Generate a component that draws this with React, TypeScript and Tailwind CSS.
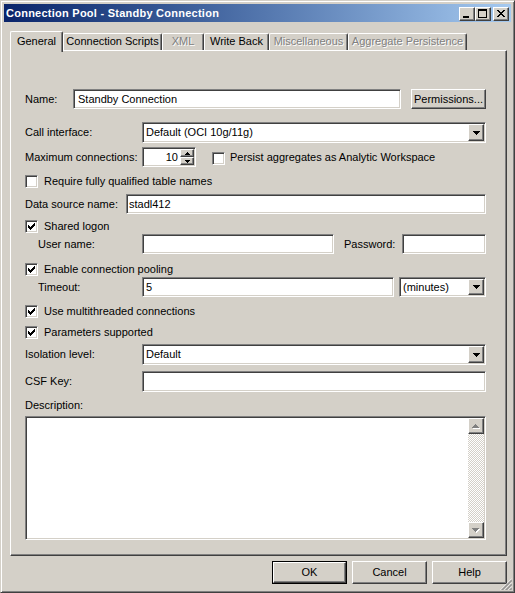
import type { ReactNode } from 'react'

// Win2000 classic chrome: face #d4d0c8, 3D edges white / #808080 / #404040.
const raised =
  'border border-t-white border-l-white border-r-[#404040] border-b-[#404040] shadow-[inset_-1px_-1px_0_#808080]'
const sunken =
  'border border-t-[#808080] border-l-[#808080] border-r-white border-b-white shadow-[inset_1px_1px_0_#404040,inset_-1px_-1px_0_#d4d0c8]'
const disabledText = 'text-[#808080] [text-shadow:1px_1px_0_#fff]'

function DownArrow({ color = '#000' }: { color?: string }) {
  return (
    <svg width="7" height="4" shapeRendering="crispEdges" className="block">
      <rect x="0" y="0" width="7" height="1" fill={color} />
      <rect x="1" y="1" width="5" height="1" fill={color} />
      <rect x="2" y="2" width="3" height="1" fill={color} />
      <rect x="3" y="3" width="1" height="1" fill={color} />
    </svg>
  )
}

function UpArrow({ color = '#000', size = 7 }: { color?: string; size?: number }) {
  const rows = size === 7 ? 4 : 3
  return (
    <svg width={size} height={rows} shapeRendering="crispEdges" className="block">
      {Array.from({ length: rows }).map((_, i) => (
        <rect key={i} x={rows - 1 - i} y={i} width={size - 2 * (rows - 1 - i)} height="1" fill={color} />
      ))}
    </svg>
  )
}

function GrayUp() {
  return (
    <span className="relative block w-[8px] h-[5px]">
      <span className="absolute left-[1px] top-[1px]">
        <UpArrow color="#fff" />
      </span>
      <span className="absolute left-0 top-0">
        <UpArrow color="#808080" />
      </span>
    </span>
  )
}

function GrayDown() {
  return (
    <span className="relative block w-[8px] h-[5px]">
      <span className="absolute left-[1px] top-[1px]">
        <DownArrow color="#fff" />
      </span>
      <span className="absolute left-0 top-0">
        <DownArrow color="#808080" />
      </span>
    </span>
  )
}

function Check({ on }: { on?: boolean }) {
  const tops = [4, 5, 6, 5, 4, 3, 2]
  return (
    <span className={`${sunken} block w-[13px] h-[13px] shrink-0 bg-white`}>
      {on && (
        <svg width="11" height="11" shapeRendering="crispEdges" className="block">
          {tops.map((t, i) => (
            <rect key={i} x={2 + i} y={t} width="1" height="3" fill="#000" />
          ))}
        </svg>
      )}
    </span>
  )
}

function CheckRow({ on, label, mt }: { on?: boolean; label: string; mt: string }) {
  return (
    <div className={`flex h-[15px] items-center ${mt}`}>
      <Check on={on} />
      <span className="ml-[6px]">{label}</span>
    </div>
  )
}

function Field({ className, children }: { className: string; children?: ReactNode }) {
  return <div className={`${sunken} flex items-center bg-white ${className}`}>{children}</div>
}

function Combo({ className, text }: { className: string; text: string }) {
  return (
    <div className={`${sunken} flex items-stretch bg-white p-[1px] ${className}`}>
      <span className="flex flex-1 items-center pl-[2px]">{text}</span>
      <span className={`${raised} flex w-[16px] items-center justify-center bg-[#d4d0c8]`}>
        <DownArrow />
      </span>
    </div>
  )
}

function Tab({ w, selected, disabled, children }: { w: string; selected?: boolean; disabled?: boolean; children: string }) {
  return (
    <div
      className={`flex shrink-0 items-center justify-center rounded-t-[2px] border-l border-t border-r border-l-white border-t-white border-r-[#404040] bg-[#d4d0c8] shadow-[inset_-1px_0_0_#808080] ${w} ${
        selected ? 'relative z-10 -mb-[2px] h-[21px] pb-[1px]' : 'h-[17px] pb-[1px]'
      } ${disabled ? disabledText : ''}`}
    >
      {children}
    </div>
  )
}

function Button({ children, isDefault }: { children: string; isDefault?: boolean }) {
  if (isDefault) {
    return (
      <div className="h-[23px] w-[75px] border border-black">
        <div className={`${raised} flex h-full w-full items-center justify-center bg-[#d4d0c8]`}>{children}</div>
      </div>
    )
  }
  return <div className={`${raised} flex h-[23px] w-[75px] items-center justify-center bg-[#d4d0c8]`}>{children}</div>
}

function CaptionButton({ kind }: { kind: 'min' | 'max' | 'close' }) {
  return (
    <div className={`${raised} h-[14px] w-[16px] bg-[#d4d0c8]`}>
      <svg width="14" height="12" shapeRendering="crispEdges" className="block">
        {kind === 'min' && <rect x="3" y="8" width="6" height="2" fill="#000" />}
        {kind === 'max' && (
          <g fill="#000">
            <rect x="2" y="1" width="9" height="2" />
            <rect x="2" y="1" width="1" height="9" />
            <rect x="10" y="1" width="1" height="9" />
            <rect x="2" y="9" width="9" height="1" />
          </g>
        )}
        {kind === 'close' && (
          <g fill="#000">
            {Array.from({ length: 7 }).map((_, i) => (
              <g key={i}>
                <rect x={3 + i} y={2 + i} width="2" height="1" />
                <rect x={9 - i} y={2 + i} width="2" height="1" />
              </g>
            ))}
          </g>
        )}
      </svg>
    </div>
  )
}

export default function App() {
  return (
    <div className="font-['Liberation_Sans',Arial,sans-serif] text-[11px] leading-[13px] text-black">
      <div className="relative h-[593px] w-[515px] border border-t-[#d4d0c8] border-l-[#d4d0c8] border-r-[#404040] border-b-[#404040] bg-[#d4d0c8] p-[3px] shadow-[inset_1px_1px_0_#fff,inset_-1px_-1px_0_#808080]">
        {/* title bar */}
        <div className="flex h-[18px] items-start bg-linear-to-r from-[#0a246a] to-[#a6caf0] pl-[2px] pr-[2px]">
          <span className="mt-[3px] flex-1 font-bold tracking-[0.25px] text-white">
            Connection Pool - Standby Connection
          </span>
          <div className="mt-[3px] flex">
            <CaptionButton kind="min" />
            <CaptionButton kind="max" />
            <div className="ml-[2px]">
              <CaptionButton kind="close" />
            </div>
          </div>
        </div>

        {/* tabs */}
        <div className="relative z-10 ml-[6px] mt-[9px] flex h-[19px] items-end">
          <Tab w="w-[53px]" selected>
            General
          </Tab>
          <Tab w="w-[99px]">Connection Scripts</Tab>
          <Tab w="w-[42px]" disabled>
            XML
          </Tab>
          <Tab w="w-[65px]">Write Back</Tab>
          <Tab w="w-[79px]" disabled>
            Miscellaneous
          </Tab>
          <Tab w="w-[119px]" disabled>
            Aggregate Persistence
          </Tab>
        </div>

        {/* panel */}
        <div className="ml-[6px] h-[506px] w-[497px] border border-t-white border-l-white border-r-[#404040] border-b-[#404040] pl-[14px] pt-[38px] shadow-[inset_-1px_-1px_0_#808080]">
          <div className="flex h-[20px] items-center">
            <span className="w-[48px]">Name:</span>
            <Field className="h-[20px] w-[328px] pl-[4px]">Standby Connection</Field>
            <div className={`${raised} ml-[10px] flex h-[20px] w-[75px] items-center justify-center bg-[#d4d0c8]`}>
              Permissions...
            </div>
          </div>

          <div className="mt-[13px] flex h-[21px] items-center">
            <span className="w-[117px]">Call interface:</span>
            <Combo className="h-[21px] w-[344px]" text="Default (OCI 10g/11g)" />
          </div>

          <div className="mt-[4px] flex h-[20px] items-center">
            <span className="w-[117px]">Maximum connections:</span>
            <div className={`${sunken} flex h-[20px] w-[54px] items-stretch bg-white p-[1px]`}>
              <span className="flex flex-1 items-center justify-end pr-[2px]">10</span>
              <div className="flex w-[14px] flex-col">
                <span className={`${raised} flex h-[8px] items-center justify-center bg-[#d4d0c8]`}>
                  <UpArrow size={5} />
                </span>
                <span className={`${raised} flex h-[8px] items-center justify-center bg-[#d4d0c8]`}>
                  <svg width="5" height="3" shapeRendering="crispEdges" className="block">
                    <rect x="0" y="0" width="5" height="1" fill="#000" />
                    <rect x="1" y="1" width="3" height="1" fill="#000" />
                    <rect x="2" y="2" width="1" height="1" fill="#000" />
                  </svg>
                </span>
              </div>
            </div>
            <span className="ml-[16px] mt-[2px]">
              <Check />
            </span>
            <span className="ml-[5px]">Persist aggregates as Analytic Workspace</span>
          </div>

          <CheckRow mt="mt-[7px]" label="Require fully qualified table names" />

          <div className="mt-[5px] flex h-[20px] items-center">
            <span className="w-[101px]">Data source name:</span>
            <Field className="h-[20px] w-[360px] pl-[2px]">stadl412</Field>
          </div>

          <CheckRow mt="mt-[5px]" on label="Shared logon" />

          <div className="flex h-[20px] items-center">
            <span className="w-[117px] pl-[13px]">User name:</span>
            <Field className="h-[20px] w-[192px]" />
            <span className="ml-[10px] w-[58px]">Password:</span>
            <Field className="h-[20px] w-[84px]" />
          </div>

          <CheckRow mt="mt-[8px]" on label="Enable connection pooling" />

          <div className="flex h-[20px] items-center">
            <span className="w-[117px] pl-[13px]">Timeout:</span>
            <Field className="h-[20px] w-[252px] pl-[3px]">5</Field>
            <Combo className="ml-[5px] h-[20px] w-[87px]" text="(minutes)" />
          </div>

          <CheckRow mt="mt-[7px]" on label="Use multithreaded connections" />
          <CheckRow mt="mt-[6px]" on label="Parameters supported" />

          <div className="mt-[4px] flex h-[21px] items-center">
            <span className="w-[117px]">Isolation level:</span>
            <Combo className="h-[21px] w-[344px]" text="Default" />
          </div>

          <div className="mt-[6px] flex h-[21px] items-center">
            <span className="w-[117px]">CSF Key:</span>
            <Field className="h-[21px] w-[344px]" />
          </div>

          <div className="mt-[6px] flex h-[14px] items-center">Description:</div>

          <div className={`${sunken} mt-[4px] flex h-[124px] w-[461px] bg-white p-[1px]`}>
            <div className="flex-1" />
            <div className="flex w-[16px] flex-col">
              <span className={`${raised} flex h-[16px] items-center justify-center bg-[#d4d0c8]`}>
                <GrayUp />
              </span>
              <span className="flex-1 bg-[repeating-conic-gradient(#d4d0c8_0_25%,#ffffff_0_50%)] bg-[length:2px_2px]" />
              <span className={`${raised} flex h-[16px] items-center justify-center bg-[#d4d0c8]`}>
                <GrayDown />
              </span>
            </div>
          </div>
        </div>

        {/* dialog buttons */}
        <div className="ml-[6px] mt-[5px] flex w-[497px] justify-end gap-[5px]">
          <Button isDefault>OK</Button>
          <Button>Cancel</Button>
          <Button>Help</Button>
        </div>

        {/* size grip */}
        <svg width="12" height="12" className="absolute bottom-[2px] right-[2px]">
          {[0, 4, 8].map((k) => (
            <g key={k}>
              <line x1={k + 0.5} y1="12" x2="12" y2={k + 0.5} stroke="#fff" />
              <line x1={k + 1.5} y1="12" x2="12" y2={k + 1.5} stroke="#808080" />
              <line x1={k + 2.5} y1="12" x2="12" y2={k + 2.5} stroke="#808080" />
            </g>
          ))}
        </svg>
      </div>
    </div>
  )
}
